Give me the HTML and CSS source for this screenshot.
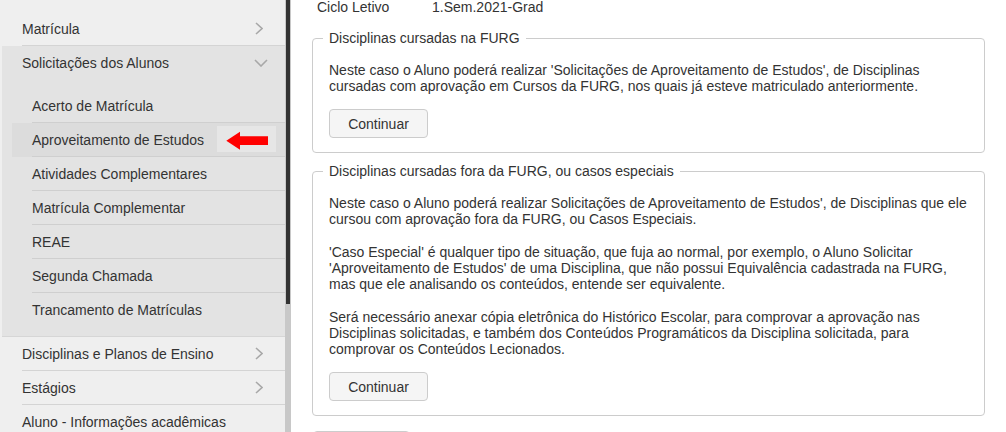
FILE: index.html
```html
<!DOCTYPE html>
<html>
<head>
	<meta charset="utf-8">
	<meta name="viewport" content="width=device-width, initial-scale=1.0">
	<title>Aproveitamento de Estudos</title>
	<link rel="stylesheet" href="styles.css">
</head>
<body>
<div class="pagina">
	<aside class="menu">
		<ul class="menu-lista">
			<li class="item">
				<a href="#">Matrícula
					<svg class="chevron" width="8" height="13" viewBox="0 0 8 13"><path d="M1 1 L7 6.5 L1 12"/></svg>
				</a>
			</li>
			<li class="grupo">
				<a href="#" class="grupo-titulo">Solicitações dos Alunos
					<svg class="chevron" width="14" height="8" viewBox="0 0 14 8"><path d="M1 1 L7 7 L13 1"/></svg>
				</a>
				<ul class="sub">
					<li><a href="#">Acerto de Matrícula</a></li>
					<li class="ativo">
						<a href="#">Aproveitamento de Estudos</a>
						<svg class="seta" width="59" height="26" viewBox="0 0 59 26">
							<rect width="59" height="26" fill="#e6e6e6"/>
							<polygon points="9.3,14.7 23,5.7 23,10.3 51,10.3 51,19 23,19 23,23.7" fill="#ff0000"/>
						</svg>
					</li>
					<li><a href="#">Atividades Complementares</a></li>
					<li><a href="#">Matrícula Complementar</a></li>
					<li><a href="#">REAE</a></li>
					<li><a href="#">Segunda Chamada</a></li>
					<li><a href="#">Trancamento de Matrículas</a></li>
				</ul>
			</li>
			<li class="item">
				<a href="#">Disciplinas e Planos de Ensino
					<svg class="chevron" width="8" height="13" viewBox="0 0 8 13"><path d="M1 1 L7 6.5 L1 12"/></svg>
				</a>
			</li>
			<li class="item">
				<a href="#">Estágios
					<svg class="chevron" width="8" height="13" viewBox="0 0 8 13"><path d="M1 1 L7 6.5 L1 12"/></svg>
				</a>
			</li>
			<li class="item"><a href="#">Aluno - Informações acadêmicas</a></li>
		</ul>
	</aside>
	<div class="rolagem"><div class="rolagem-barra"></div></div>

	<main class="conteudo">
		<div class="ciclo">
			<span class="ciclo-rotulo">Ciclo Letivo</span>
			<span>1.Sem.2021-Grad</span>
		</div>

		<fieldset class="quadro">
			<legend>Disciplinas cursadas na FURG</legend>
			<p>Neste caso o Aluno poderá realizar 'Solicitações de Aproveitamento de Estudos', de Disciplinas<br>
			cursadas com aprovação em Cursos da FURG, nos quais já esteve matriculado anteriormente.</p>
			<button type="button" class="botao">Continuar</button>
		</fieldset>

		<fieldset class="quadro">
			<legend>Disciplinas cursadas fora da FURG, ou casos especiais</legend>
			<p>Neste caso o Aluno poderá realizar Solicitações de Aproveitamento de Estudos', de Disciplinas que ele<br>
			cursou com aprovação fora da FURG, ou Casos Especiais.</p>
			<p>'Caso Especial' é qualquer tipo de situação, que fuja ao normal, por exemplo, o Aluno Solicitar<br>
			'Aproveitamento de Estudos' de uma Disciplina, que não possui Equivalência cadastrada na FURG,<br>
			mas que ele analisando os conteúdos, entende ser equivalente.</p>
			<p>Será necessário anexar cópia eletrônica do Histórico Escolar, para comprovar a aprovação nas<br>
			Disciplinas solicitadas, e também dos Conteúdos Programáticos da Disciplina solicitada, para<br>
			comprovar os Conteúdos Lecionados.</p>
			<button type="button" class="botao">Continuar</button>
		</fieldset>

		<div class="acoes">
			<button type="button" class="botao botao-voltar">Voltar</button>
		</div>
	</main>
</div>
</body>
</html>
```

FILE: styles.css
```css
body{
	margin:0;
	font:14px "Liberation Sans", Arial, sans-serif;
	color:#333;
}
.pagina{
	display:flex;
	height:432px;
	overflow:hidden;
}

/* menu lateral */
.menu{
	width:285px;
	flex-shrink:0;
	background:#efefef;
	padding-top:12px;
}
.menu-lista, .sub{
	list-style:none;
	margin:0;
	padding:0;
}
.menu a{
	color:#333;
	text-decoration:none;
}
.item > a{
	display:flex;
	align-items:center;
	justify-content:space-between;
	height:33px;
	margin-left:22px;
	padding-right:22px;
	border-bottom:1px solid #d4d4d4;
}
.chevron path{
	fill:none;
	stroke:#a8a8a8;
	stroke-width:1.6;
}
.grupo{
	margin-left:2px;
	background:#e3e3e3;
	border-bottom:1px solid #d6d6d6;
}
.grupo-titulo{
	display:flex;
	align-items:center;
	justify-content:space-between;
	height:34px;
	padding:0 17px 0 20px;
}
.sub{
	padding:9px 0 10px;
}
.sub li{
	position:relative;
	margin-left:10px;
}
.sub li a{
	display:flex;
	align-items:center;
	height:33px;
	margin-left:20px;
	border-bottom:1px solid #cfcfcf;
}
.sub li:last-child a{
	border-bottom:none;
}
.sub li.ativo{
	background:#dcdcdc;
}
.seta{
	position:absolute;
	left:205px;
	top:3px;
}

/* barra de rolagem */
.rolagem{
	width:6px;
	flex-shrink:0;
	background:#c8c8c8;
}
.rolagem-barra{
	width:4px;
	height:304px;
	margin-left:1px;
	background:#333;
}

/* conteudo */
.conteudo{
	flex:1;
	padding:0 21px;
}
.ciclo{
	display:flex;
	margin-top:-1px;
}
.ciclo-rotulo{
	width:115px;
	margin-left:5px;
}
.quadro{
	margin:15px 0 0;
	padding:2px 16px 14px;
	border:1px solid #cccccc;
	border-radius:4px;
}
.quadro + .quadro{
	margin-top:10px;
}
.quadro legend{
	padding:0 6px;
	margin-left:-6px;
}
.quadro p{
	margin:14px 0;
}
.quadro p + p{
	margin-top:17px;
}
.quadro p:last-of-type{
	margin-bottom:15px;
}
.botao{
	width:99px;
	height:29px;
	padding:0;
	font:14px "Liberation Sans", Arial, sans-serif;
	color:#333;
	background:#f5f5f5;
	border:1px solid #cccccc;
	border-radius:4px;
}
.acoes{
	margin-top:15px;
	padding-left:1px;
}
.botao-voltar{
	width:97px;
}
```
